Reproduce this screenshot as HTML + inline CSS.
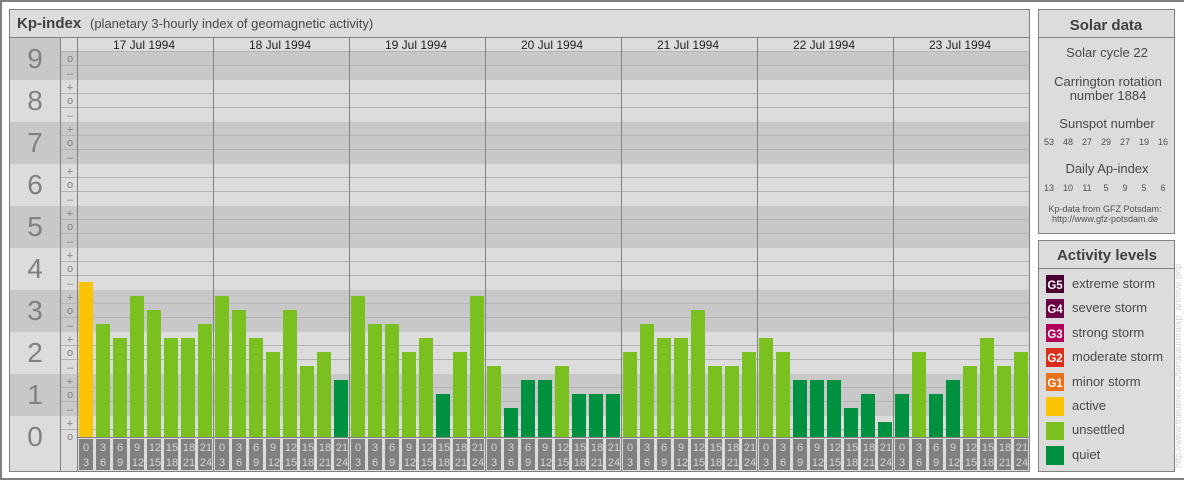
<!DOCTYPE html>
<html><head><meta charset="utf-8"><title>Kp-index</title>
<style>
html,body{margin:0;padding:0;background:#fff}
svg{display:block;font-family:"Liberation Sans",sans-serif}
rect{shape-rendering:crispEdges}
.u{fill:#7ac11f}.q{fill:#009140}.a{fill:#fcc400}
.c rect{fill:#808080}
.l{font-size:11px;fill:#d4d4d4;text-anchor:middle}
.d{font-size:12px;fill:#222;text-anchor:middle}
.b{font-size:28px;fill:#808080;text-anchor:middle}
.t{font-size:11px;fill:#808080;text-anchor:middle}
.h{font-size:15px;font-weight:bold;fill:#404040}
.m{font-size:13px;fill:#484848;text-anchor:middle}
.s{font-size:9px;fill:#505050;text-anchor:middle}
.k{font-size:13px;fill:#484848}
.g{font-size:11.5px;font-weight:bold;fill:#fff;text-anchor:middle}
</style></head><body>
<svg width="1184" height="480" viewBox="0 0 1184 480" xmlns="http://www.w3.org/2000/svg">
<rect x="0" y="0" width="1184" height="2" fill="#808080"/>
<rect x="0" y="0" width="2" height="480" fill="#808080"/>
<rect x="0" y="478" width="1184" height="2" fill="#808080"/>

<rect x="9" y="9" width="1021" height="463" fill="#dcdcdc"/>
<rect x="10" y="38" width="50" height="42" fill="#c8c8c8"/>
<rect x="61" y="52" width="968" height="28" fill="#c8c8c8"/>
<rect x="10" y="122" width="1019" height="42" fill="#c8c8c8"/>
<rect x="10" y="206" width="1019" height="42" fill="#c8c8c8"/>
<rect x="10" y="290" width="1019" height="42" fill="#c8c8c8"/>
<rect x="10" y="374" width="1019" height="42" fill="#c8c8c8"/>
<path d="M61 51.5H1029M61 65.5H1029M61 93.5H1029M61 107.5H1029M61 135.5H1029M61 149.5H1029M61 177.5H1029M61 191.5H1029M61 219.5H1029M61 233.5H1029M61 261.5H1029M61 275.5H1029M61 303.5H1029M61 317.5H1029M61 345.5H1029M61 359.5H1029M61 387.5H1029M61 401.5H1029M61 429.5H1029" stroke="#b4b4b4" fill="none"/>

<rect class="a" x="79" y="282" width="14" height="155"/>
<rect class="u" x="96" y="324" width="14" height="113"/>
<rect class="u" x="113" y="338" width="14" height="99"/>
<rect class="u" x="130" y="296" width="14" height="141"/>
<rect class="u" x="147" y="310" width="14" height="127"/>
<rect class="u" x="164" y="338" width="14" height="99"/>
<rect class="u" x="181" y="338" width="14" height="99"/>
<rect class="u" x="198" y="324" width="14" height="113"/>

<rect class="u" x="215" y="296" width="14" height="141"/>
<rect class="u" x="232" y="310" width="14" height="127"/>
<rect class="u" x="249" y="338" width="14" height="99"/>
<rect class="u" x="266" y="352" width="14" height="85"/>
<rect class="u" x="283" y="310" width="14" height="127"/>
<rect class="u" x="300" y="366" width="14" height="71"/>
<rect class="u" x="317" y="352" width="14" height="85"/>
<rect class="q" x="334" y="380" width="14" height="57"/>

<rect class="u" x="351" y="296" width="14" height="141"/>
<rect class="u" x="368" y="324" width="14" height="113"/>
<rect class="u" x="385" y="324" width="14" height="113"/>
<rect class="u" x="402" y="352" width="14" height="85"/>
<rect class="u" x="419" y="338" width="14" height="99"/>
<rect class="q" x="436" y="394" width="14" height="43"/>
<rect class="u" x="453" y="352" width="14" height="85"/>
<rect class="u" x="470" y="296" width="14" height="141"/>

<rect class="u" x="487" y="366" width="14" height="71"/>
<rect class="q" x="504" y="408" width="14" height="29"/>
<rect class="q" x="521" y="380" width="14" height="57"/>
<rect class="q" x="538" y="380" width="14" height="57"/>
<rect class="u" x="555" y="366" width="14" height="71"/>
<rect class="q" x="572" y="394" width="14" height="43"/>
<rect class="q" x="589" y="394" width="14" height="43"/>
<rect class="q" x="606" y="394" width="14" height="43"/>

<rect class="u" x="623" y="352" width="14" height="85"/>
<rect class="u" x="640" y="324" width="14" height="113"/>
<rect class="u" x="657" y="338" width="14" height="99"/>
<rect class="u" x="674" y="338" width="14" height="99"/>
<rect class="u" x="691" y="310" width="14" height="127"/>
<rect class="u" x="708" y="366" width="14" height="71"/>
<rect class="u" x="725" y="366" width="14" height="71"/>
<rect class="u" x="742" y="352" width="14" height="85"/>

<rect class="u" x="759" y="338" width="14" height="99"/>
<rect class="u" x="776" y="352" width="14" height="85"/>
<rect class="q" x="793" y="380" width="14" height="57"/>
<rect class="q" x="810" y="380" width="14" height="57"/>
<rect class="q" x="827" y="380" width="14" height="57"/>
<rect class="q" x="844" y="408" width="14" height="29"/>
<rect class="q" x="861" y="394" width="14" height="43"/>
<rect class="q" x="878" y="422" width="14" height="15"/>

<rect class="q" x="895" y="394" width="14" height="43"/>
<rect class="u" x="912" y="352" width="14" height="85"/>
<rect class="q" x="929" y="394" width="14" height="43"/>
<rect class="q" x="946" y="380" width="14" height="57"/>
<rect class="u" x="963" y="366" width="14" height="71"/>
<rect class="u" x="980" y="338" width="14" height="99"/>
<rect class="u" x="997" y="366" width="14" height="71"/>
<rect class="u" x="1014" y="352" width="14" height="85"/>

<g fill="none" stroke="#808080" shape-rendering="crispEdges">
<rect x="9.5" y="9.5" width="1020" height="462"/>
<path d="M10 37.5H1029M77 437.5H1029M60.5 38V471M77.5 38V471M213.5 38V471M349.5 38V471M485.5 38V471M621.5 38V471M757.5 38V471M893.5 38V471"/>
<rect x="1038.5" y="9.5" width="136" height="224" fill="#dcdcdc"/>
<path d="M1039 37.5H1174"/>
<rect x="1038.5" y="240.5" width="136" height="231" fill="#dcdcdc"/>
<path d="M1039 268.5H1174"/>
</g>

<text class="h" x="17" y="28">Kp-index</text>
<text x="90" y="28" font-size="13" fill="#484848">(planetary 3-hourly index of geomagnetic activity)</text>

<text class="d" x="144" y="49">17 Jul 1994</text>
<text class="d" x="280" y="49">18 Jul 1994</text>
<text class="d" x="416" y="49">19 Jul 1994</text>
<text class="d" x="552" y="49">20 Jul 1994</text>
<text class="d" x="688" y="49">21 Jul 1994</text>
<text class="d" x="824" y="49">22 Jul 1994</text>
<text class="d" x="960" y="49">23 Jul 1994</text>

<text class="b" x="35" y="68">9</text>
<text class="b" x="35" y="110">8</text>
<text class="b" x="35" y="152">7</text>
<text class="b" x="35" y="194">6</text>
<text class="b" x="35" y="236">5</text>
<text class="b" x="35" y="278">4</text>
<text class="b" x="35" y="320">3</text>
<text class="b" x="35" y="362">2</text>
<text class="b" x="35" y="404">1</text>
<text class="b" x="35" y="446">0</text>

<text class="t" x="70" y="62">o</text><text class="t" x="70" y="77">–</text>
<text class="t" x="70" y="91">+</text><text class="t" x="70" y="104">o</text><text class="t" x="70" y="119">–</text>
<text class="t" x="70" y="133">+</text><text class="t" x="70" y="146">o</text><text class="t" x="70" y="161">–</text>
<text class="t" x="70" y="175">+</text><text class="t" x="70" y="188">o</text><text class="t" x="70" y="203">–</text>
<text class="t" x="70" y="217">+</text><text class="t" x="70" y="230">o</text><text class="t" x="70" y="245">–</text>
<text class="t" x="70" y="259">+</text><text class="t" x="70" y="272">o</text><text class="t" x="70" y="287">–</text>
<text class="t" x="70" y="301">+</text><text class="t" x="70" y="314">o</text><text class="t" x="70" y="329">–</text>
<text class="t" x="70" y="343">+</text><text class="t" x="70" y="356">o</text><text class="t" x="70" y="371">–</text>
<text class="t" x="70" y="385">+</text><text class="t" x="70" y="398">o</text><text class="t" x="70" y="413">–</text>
<text class="t" x="70" y="427">+</text><text class="t" x="70" y="440">o</text>

<g class="c">
<rect x="79" y="439" width="14" height="31"/><rect x="96" y="439" width="14" height="31"/><rect x="113" y="439" width="14" height="31"/><rect x="130" y="439" width="14" height="31"/><rect x="147" y="439" width="14" height="31"/><rect x="164" y="439" width="14" height="31"/><rect x="181" y="439" width="14" height="31"/><rect x="198" y="439" width="14" height="31"/>
<rect x="215" y="439" width="14" height="31"/><rect x="232" y="439" width="14" height="31"/><rect x="249" y="439" width="14" height="31"/><rect x="266" y="439" width="14" height="31"/><rect x="283" y="439" width="14" height="31"/><rect x="300" y="439" width="14" height="31"/><rect x="317" y="439" width="14" height="31"/><rect x="334" y="439" width="14" height="31"/>
<rect x="351" y="439" width="14" height="31"/><rect x="368" y="439" width="14" height="31"/><rect x="385" y="439" width="14" height="31"/><rect x="402" y="439" width="14" height="31"/><rect x="419" y="439" width="14" height="31"/><rect x="436" y="439" width="14" height="31"/><rect x="453" y="439" width="14" height="31"/><rect x="470" y="439" width="14" height="31"/>
<rect x="487" y="439" width="14" height="31"/><rect x="504" y="439" width="14" height="31"/><rect x="521" y="439" width="14" height="31"/><rect x="538" y="439" width="14" height="31"/><rect x="555" y="439" width="14" height="31"/><rect x="572" y="439" width="14" height="31"/><rect x="589" y="439" width="14" height="31"/><rect x="606" y="439" width="14" height="31"/>
<rect x="623" y="439" width="14" height="31"/><rect x="640" y="439" width="14" height="31"/><rect x="657" y="439" width="14" height="31"/><rect x="674" y="439" width="14" height="31"/><rect x="691" y="439" width="14" height="31"/><rect x="708" y="439" width="14" height="31"/><rect x="725" y="439" width="14" height="31"/><rect x="742" y="439" width="14" height="31"/>
<rect x="759" y="439" width="14" height="31"/><rect x="776" y="439" width="14" height="31"/><rect x="793" y="439" width="14" height="31"/><rect x="810" y="439" width="14" height="31"/><rect x="827" y="439" width="14" height="31"/><rect x="844" y="439" width="14" height="31"/><rect x="861" y="439" width="14" height="31"/><rect x="878" y="439" width="14" height="31"/>
<rect x="895" y="439" width="14" height="31"/><rect x="912" y="439" width="14" height="31"/><rect x="929" y="439" width="14" height="31"/><rect x="946" y="439" width="14" height="31"/><rect x="963" y="439" width="14" height="31"/><rect x="980" y="439" width="14" height="31"/><rect x="997" y="439" width="14" height="31"/><rect x="1014" y="439" width="14" height="31"/>
</g>

<g class="l">
<text x="86" y="451">0<tspan x="86" y="466">3</tspan></text><text x="103" y="451">3<tspan x="103" y="466">6</tspan></text><text x="120" y="451">6<tspan x="120" y="466">9</tspan></text><text x="137" y="451">9<tspan x="138" y="466">12</tspan></text><text x="155" y="451">12<tspan x="155" y="466">15</tspan></text><text x="172" y="451">15<tspan x="172" y="466">18</tspan></text><text x="189" y="451">18<tspan x="189" y="466">21</tspan></text><text x="206" y="451">21<tspan x="206" y="466">24</tspan></text>
<text x="222" y="451">0<tspan x="222" y="466">3</tspan></text><text x="239" y="451">3<tspan x="239" y="466">6</tspan></text><text x="256" y="451">6<tspan x="256" y="466">9</tspan></text><text x="273" y="451">9<tspan x="274" y="466">12</tspan></text><text x="291" y="451">12<tspan x="291" y="466">15</tspan></text><text x="308" y="451">15<tspan x="308" y="466">18</tspan></text><text x="325" y="451">18<tspan x="325" y="466">21</tspan></text><text x="342" y="451">21<tspan x="342" y="466">24</tspan></text>
<text x="358" y="451">0<tspan x="358" y="466">3</tspan></text><text x="375" y="451">3<tspan x="375" y="466">6</tspan></text><text x="392" y="451">6<tspan x="392" y="466">9</tspan></text><text x="409" y="451">9<tspan x="410" y="466">12</tspan></text><text x="427" y="451">12<tspan x="427" y="466">15</tspan></text><text x="444" y="451">15<tspan x="444" y="466">18</tspan></text><text x="461" y="451">18<tspan x="461" y="466">21</tspan></text><text x="478" y="451">21<tspan x="478" y="466">24</tspan></text>
<text x="494" y="451">0<tspan x="494" y="466">3</tspan></text><text x="511" y="451">3<tspan x="511" y="466">6</tspan></text><text x="528" y="451">6<tspan x="528" y="466">9</tspan></text><text x="545" y="451">9<tspan x="546" y="466">12</tspan></text><text x="563" y="451">12<tspan x="563" y="466">15</tspan></text><text x="580" y="451">15<tspan x="580" y="466">18</tspan></text><text x="597" y="451">18<tspan x="597" y="466">21</tspan></text><text x="614" y="451">21<tspan x="614" y="466">24</tspan></text>
<text x="630" y="451">0<tspan x="630" y="466">3</tspan></text><text x="647" y="451">3<tspan x="647" y="466">6</tspan></text><text x="664" y="451">6<tspan x="664" y="466">9</tspan></text><text x="681" y="451">9<tspan x="682" y="466">12</tspan></text><text x="699" y="451">12<tspan x="699" y="466">15</tspan></text><text x="716" y="451">15<tspan x="716" y="466">18</tspan></text><text x="733" y="451">18<tspan x="733" y="466">21</tspan></text><text x="750" y="451">21<tspan x="750" y="466">24</tspan></text>
<text x="766" y="451">0<tspan x="766" y="466">3</tspan></text><text x="783" y="451">3<tspan x="783" y="466">6</tspan></text><text x="800" y="451">6<tspan x="800" y="466">9</tspan></text><text x="817" y="451">9<tspan x="818" y="466">12</tspan></text><text x="835" y="451">12<tspan x="835" y="466">15</tspan></text><text x="852" y="451">15<tspan x="852" y="466">18</tspan></text><text x="869" y="451">18<tspan x="869" y="466">21</tspan></text><text x="886" y="451">21<tspan x="886" y="466">24</tspan></text>
<text x="902" y="451">0<tspan x="902" y="466">3</tspan></text><text x="919" y="451">3<tspan x="919" y="466">6</tspan></text><text x="936" y="451">6<tspan x="936" y="466">9</tspan></text><text x="953" y="451">9<tspan x="954" y="466">12</tspan></text><text x="971" y="451">12<tspan x="971" y="466">15</tspan></text><text x="988" y="451">15<tspan x="988" y="466">18</tspan></text><text x="1005" y="451">18<tspan x="1005" y="466">21</tspan></text><text x="1022" y="451">21<tspan x="1022" y="466">24</tspan></text>
</g>

<text class="h" x="1106" y="30" text-anchor="middle">Solar data</text>
<text class="m" x="1107" y="57">Solar cycle 22</text>
<text class="m" x="1108" y="86">Carrington rotation</text>
<text class="m" x="1108" y="100">number 1884</text>
<text class="m" x="1107" y="128">Sunspot number</text>
<text class="s" x="1049" y="145">53</text><text class="s" x="1068" y="145">48</text><text class="s" x="1087" y="145">27</text><text class="s" x="1106" y="145">29</text><text class="s" x="1125" y="145">27</text><text class="s" x="1144" y="145">19</text><text class="s" x="1163" y="145">16</text>
<text class="m" x="1107" y="173">Daily Ap-index</text>
<text class="s" x="1049" y="191">13</text><text class="s" x="1068" y="191">10</text><text class="s" x="1087" y="191">11</text><text class="s" x="1106" y="191">5</text><text class="s" x="1125" y="191">9</text><text class="s" x="1144" y="191">5</text><text class="s" x="1163" y="191">6</text>
<text class="s" x="1105" y="212">Kp-data from GFZ Potsdam:</text>
<text class="s" x="1105" y="222">http://www.gfz-potsdam.de</text>

<text class="h" x="1107" y="260" text-anchor="middle">Activity levels</text>
<rect x="1046" y="275" width="18" height="18" fill="#4a0030"/>
<rect x="1046" y="299" width="18" height="19" fill="#6e0045"/>
<rect x="1046" y="324" width="18" height="18" fill="#b0005c"/>
<rect x="1046" y="348" width="18" height="19" fill="#d9301c"/>
<rect x="1046" y="373" width="18" height="18" fill="#e8711a"/>
<rect x="1046" y="397" width="18" height="19" fill="#fcc400"/>
<rect x="1046" y="422" width="18" height="18" fill="#7ac11f"/>
<rect x="1046" y="446" width="18" height="19" fill="#009140"/>
<text class="g" x="1055" y="289">G5</text>
<text class="g" x="1055" y="313">G4</text>
<text class="g" x="1055" y="338">G3</text>
<text class="g" x="1055" y="362">G2</text>
<text class="g" x="1055" y="387">G1</text>
<text class="k" x="1072" y="288">extreme storm</text>
<text class="k" x="1072" y="312">severe storm</text>
<text class="k" x="1072" y="337">strong storm</text>
<text class="k" x="1072" y="361">moderate storm</text>
<text class="k" x="1072" y="386">minor storm</text>
<text class="k" x="1072" y="410">active</text>
<text class="k" x="1072" y="434">unsettled</text>
<text class="k" x="1072" y="459">quiet</text>

<text transform="translate(1181 468) rotate(-90)" font-size="9" fill="#d0d0d0">http://www.fheusner.eu/terra/aurora/kp_archive.php</text>
</svg>
</body></html>
